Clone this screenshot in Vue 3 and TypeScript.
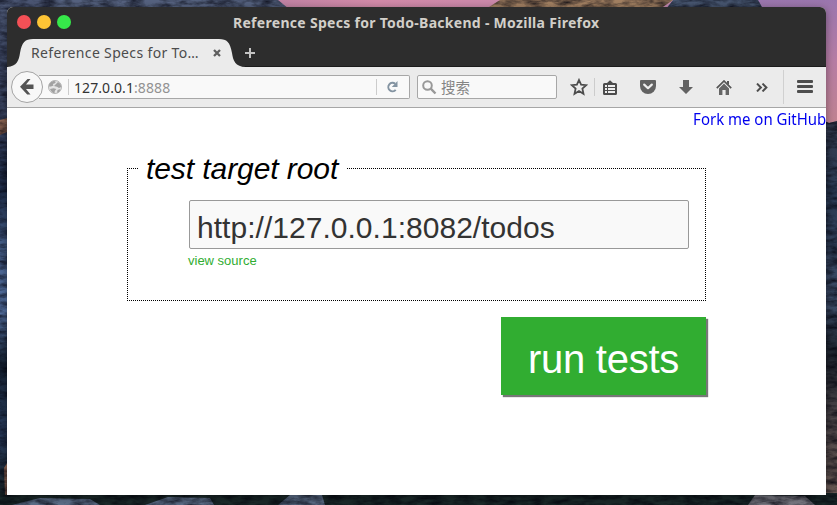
<script setup lang="ts">
import { ref } from 'vue'

const pageTitle = 'Reference Specs for Todo-Backend - Mozilla Firefox'
const tabTitle = 'Reference Specs for To…'
const targetRoot = ref('http://127.0.0.1:8082/todos')
</script>

<template>
  <div class="desktop">
    <svg class="wallpaper" width="837" height="505" viewBox="0 0 837 505" aria-hidden="true">
      <defs>
        <linearGradient id="sky" x1="0" x2="1" y1="0" y2="0">
          <stop offset="0" stop-color="#8c6b95" />
          <stop offset=".45" stop-color="#d28aa8" />
          <stop offset="1" stop-color="#b985b2" />
        </linearGradient>
        <linearGradient id="skyRight" x1="0" x2="0" y1="0" y2="1">
          <stop offset="0" stop-color="#9a76ae" />
          <stop offset=".5" stop-color="#b77da4" />
          <stop offset="1" stop-color="#c08391" />
        </linearGradient>
        <linearGradient id="cliffLeft" x1="0" x2="0" y1="0" y2="1">
          <stop offset="0" stop-color="#4b5673" />
          <stop offset=".22" stop-color="#3c4764" />
          <stop offset=".38" stop-color="#202f4b" />
          <stop offset=".5" stop-color="#4c6793" />
          <stop offset=".62" stop-color="#5470a0" />
          <stop offset=".72" stop-color="#182535" />
          <stop offset=".86" stop-color="#2b3f60" />
          <stop offset="1" stop-color="#17211f" />
        </linearGradient>
        <linearGradient id="cliffRight" x1="0" x2="0" y1="0" y2="1">
          <stop offset="0" stop-color="#353c50" />
          <stop offset=".2" stop-color="#2c3b54" />
          <stop offset=".48" stop-color="#3d4c67" />
          <stop offset=".6" stop-color="#1f2630" />
          <stop offset=".8" stop-color="#51494b" />
          <stop offset="1" stop-color="#6b5a53" />
        </linearGradient>
        <filter id="rock" x="0" y="0" width="100%" height="100%" color-interpolation-filters="sRGB">
          <feTurbulence type="fractalNoise" baseFrequency=".07 .2" numOctaves="4" seed="4" />
          <feColorMatrix values="0 0 0 0 0  0 0 0 0 0  0 0 0 0 0.04  1.3 0 0 0 -.42" />
          <feComposite in2="SourceGraphic" operator="in" result="shade" />
          <feMerge>
            <feMergeNode in="SourceGraphic" />
            <feMergeNode in="shade" />
          </feMerge>
        </filter>
      </defs>
      <rect width="837" height="505" fill="url(#sky)" />
      <rect x="758" width="79" height="124" fill="url(#skyRight)" />
      <g filter="url(#rock)">
        <path d="M0 0H55L62 7V505H0Z" fill="url(#cliffLeft)" />
        <path d="M50 0H278L289 9H50Z" fill="#55627f" />
        <path d="M486 9L500 0H673L660 9Z" fill="#a28062" />
        <path d="M666 9L673 0H758L763 9Z" fill="#475670" />
        <path d="M820 119L829 123L837 121V505H820Z" fill="url(#cliffRight)" />
        <path d="M0 493H837V505H0Z" fill="#1b2a2a" />
        <path d="M12 505L40 498L90 499L100 505ZM145 505L168 497L210 498L214 505ZM278 505L290 495H322L325 505Z" fill="#5c6e88" />
        <path d="M748 505L755 495L805 496L815 505Z" fill="#777780" />
        <path d="M0 120L7 118V132L0 135ZM4 468L7 463V495H5Z" fill="#8d6553" />
      </g>
    </svg>

    <div class="window">
      <header class="titlebar">
        <div class="lights"><i class="red"></i><i class="yellow"></i><i class="green"></i></div>
        <span class="window-title">{{ pageTitle }}</span>
      </header>

      <div class="tabstrip">
        <div class="tab">
          <svg class="tab-shape" width="240" height="28" viewBox="0 0 240 28">
            <path d="M0 28C11 28 13 21 14 14C16 3 19 0 27 0H213C221 0 224 3 226 14C227 21 229 28 240 28Z" fill="#ebebeb" />
          </svg>
          <span class="tab-title">{{ tabTitle }}</span>
          <svg class="tab-close" width="8" height="8" viewBox="0 0 8 8">
            <path d="M1 1L7 7M7 1L1 7" stroke="#5f5f5f" stroke-width="2.3" />
          </svg>
        </div>
        <svg class="new-tab" width="10" height="10" viewBox="0 0 10 10">
          <path d="M5 0V10M0 5H10" stroke="#c4c4c4" stroke-width="2" />
        </svg>
      </div>

      <div class="toolbar">
        <div class="back">
          <svg width="14" height="16" viewBox="0 0 14 16">
            <path d="M7.5 0H10.5L6 5.5H13.5V10H6L10.5 15.5H7.2L0 7.8Z" fill="#555" />
          </svg>
        </div>
        <div class="urlbar">
          <svg class="globe" width="14" height="14" viewBox="0 0 14 14">
            <circle cx="7" cy="7" r="6.5" fill="#e4e4e4" stroke="#b5b5b5" />
            <path d="M1 4.5L3 2L6 .8L8 2L6.5 3.6L4.8 4L5.5 5.5L3.8 6.2L1.3 6.8ZM6 6L8 4L10 2L12.5 4L13.3 7L11 8L9 6.8ZM2 9L5.5 8.2L8.3 9L6.8 11L6.5 13.3L4.8 12.7L3 11ZM9.5 10L12.5 9L11.5 11.6L9 13Z" fill="#a2a2a2" />
          </svg>
          <span class="url">127.0.0.1<em>:8888</em></span>
          <span class="reload">
            <svg width="12" height="12" viewBox="0 0 12 12">
              <path d="M9.2 2.8A4.2 4.2 0 1 0 9.7 8.8" fill="none" stroke="#8494a2" stroke-width="2" />
              <path d="M11.5 0V6H5.8Z" fill="#8494a2" />
            </svg>
          </span>
        </div>
        <div class="search">
          <svg width="15" height="15" viewBox="0 0 15 15">
            <circle cx="5.5" cy="5.5" r="4.3" fill="none" stroke="#999" stroke-width="2" />
            <path d="M8.7 8.7L13.5 13.5" stroke="#999" stroke-width="2.4" />
          </svg>
          <span>搜索</span>
        </div>
        <div class="tool star">
          <svg width="18" height="18" viewBox="0 0 18 18">
            <path d="M9 2L11.1 6.7L16.2 7.2L12.4 10.6L13.5 15.8L9 13.1L4.5 15.8L5.6 10.6L1.8 7.2L6.9 6.7Z" fill="none" stroke="#4d4d4d" stroke-width="1.8" />
          </svg>
        </div>
        <div class="tool list">
          <svg width="14" height="15" viewBox="0 0 14 15">
            <path d="M1.5 3H4L7 .2L10 3H12.5Q14 3 14 4.5V13.5Q14 15 12.5 15H1.5Q0 15 0 13.5V4.5Q0 3 1.5 3Z" fill="#4c4c4c" />
            <path d="M2 5H4V7H2ZM5 5H12V7H5ZM2 8H4V10H2ZM5 8H12V10H5ZM2 11H4V13H2ZM5 11H12V13H5Z" fill="#eee" />
          </svg>
        </div>
        <div class="tool">
          <svg width="16" height="14" viewBox="0 0 16 14">
            <path d="M1 0H15Q16 0 16 1V6A8 8 0 0 1 0 6V1Q0 0 1 0Z" fill="#626262" />
            <path d="M4.2 4.6L8 8.2L11.8 4.6" fill="none" stroke="#eee" stroke-width="2.2" stroke-linecap="round" stroke-linejoin="round" />
          </svg>
        </div>
        <div class="tool">
          <svg width="14" height="14" viewBox="0 0 14 14">
            <path d="M4 0H10V7H14L7 14L0 7H4Z" fill="#626262" />
          </svg>
        </div>
        <div class="tool">
          <svg width="16" height="15" viewBox="0 0 16 15">
            <path d="M.8 8.2L8 1L15.2 8.2" fill="none" stroke="#555" stroke-width="1.7" />
            <path d="M11 1H13V5L11 3.5Z" fill="#555" />
            <path d="M8 3.5L13 8.4V15H9.6V10H6.4V15H3V8.4Z" fill="#656565" />
          </svg>
        </div>
        <div class="tool">
          <svg width="12" height="9" viewBox="0 0 12 9">
            <path d="M1 .6L4.9 4.5L1 8.4M6.5 .6L10.4 4.5L6.5 8.4" fill="none" stroke="#4d4d4d" stroke-width="2" />
          </svg>
        </div>
        <div class="menu"><i></i><i></i><i></i></div>
      </div>

      <main class="page">
        <a class="fork">Fork me on GitHub</a>
        <form class="runner" @submit.prevent>
          <fieldset>
            <legend>test target root</legend>
            <input v-model="targetRoot" type="text" spellcheck="false" />
            <a class="source">view source</a>
          </fieldset>
          <button type="submit">run tests</button>
        </form>
      </main>
    </div>
  </div>
</template>

<style>
body {
  overflow: hidden;
}
</style>

<style scoped>
* {
  box-sizing: border-box;
}
svg {
  display: block;
  flex: none;
}
.desktop {
  position: relative;
  width: 837px;
  height: 505px;
  padding: 7px 11px 10px 7px;
  overflow: hidden;
  font-family: "Noto Sans", "Noto Sans CJK SC", sans-serif;
}
.wallpaper {
  position: absolute;
  inset: 0;
}
.window {
  position: relative;
  display: flex;
  flex-direction: column;
  height: 488px;
  background: #fff;
  border-radius: 6px 6px 0 0;
  box-shadow: 0 2px 9px rgba(0, 0, 0, .4);
  overflow: hidden;
}
.titlebar {
  display: flex;
  height: 32px;
  background: #2d2d2d;
}
.lights {
  display: flex;
  gap: 6px;
  width: 226px;
  padding: 8px 0 0 10px;
}
.lights i {
  width: 14px;
  height: 14px;
  border-radius: 50%;
}
.red { background: #f45056; }
.yellow { background: #fdc435; }
.green { background: #36e84a; }
.window-title {
  color: #d2cfc9;
  font: bold 14px/32px "Noto Sans", sans-serif;
  letter-spacing: .29px;
  white-space: nowrap;
}
.tabstrip {
  display: flex;
  height: 28px;
  background: #2d2d2d;
  box-shadow: inset 0 -1px #1b1b1b;
}
.tab {
  position: relative;
  display: flex;
  align-items: center;
  width: 238px;
  padding-left: 24px;
}
.tab-shape {
  position: absolute;
  left: -1px;
  top: 0;
}
.tab-title {
  position: relative;
  width: 182px;
  color: #4c4c4c;
  font-size: 14px;
  letter-spacing: .35px;
  line-height: 28px;
  white-space: nowrap;
}
.tab-close {
  position: relative;
}
.new-tab {
  margin-top: 9px;
}
.toolbar {
  display: flex;
  align-items: center;
  height: 41px;
  background: #ebebeb;
  border-bottom: 1px solid #a6a6a6;
}
.back {
  z-index: 1;
  display: flex;
  align-items: center;
  justify-content: center;
  width: 32px;
  height: 32px;
  margin-left: 4px;
  background: #f8f8f8;
  border: 1px solid #a4a4a4;
  border-radius: 50%;
}
.urlbar {
  display: flex;
  align-items: center;
  width: 371px;
  height: 24px;
  margin-left: -4px;
  padding-left: 9px;
  background: #f9f9f9;
  border: 1px solid #a7a7a7;
  border-left: 0;
  border-radius: 0 2px 2px 0;
}
.url {
  width: 308px;
  margin-left: 6px;
  padding: 1px 0 0 5px;
  border-left: 1px solid #ccc;
  color: #333;
  font-size: 14px;
  letter-spacing: .08px;
  line-height: 15px;
  white-space: nowrap;
}
.url em {
  color: #929292;
  font-style: normal;
}
.reload {
  display: flex;
  align-items: center;
  height: 16px;
  padding-left: 9px;
  border-left: 1px solid #ccc;
}
.search {
  display: flex;
  align-items: center;
  gap: 4px;
  width: 140px;
  height: 24px;
  margin-left: 7px;
  padding-left: 4px;
  background: #f9f9f9;
  border: 1px solid #a7a7a7;
  border-radius: 2px;
  color: #858585;
  font: 14.5px/22px "Noto Sans CJK SC", sans-serif;
}
.tool {
  display: flex;
  align-items: center;
  justify-content: center;
  width: 38px;
}
.star {
  width: 18px;
  margin-left: 13px;
  margin-right: 6px;
}
.list {
  width: 35px;
  height: 18px;
  padding-right: 4px;
  border-left: 1px solid #ccc;
}
.menu {
  display: flex;
  flex: 1;
  flex-direction: column;
  align-items: center;
  justify-content: center;
  gap: 2px;
  height: 34px;
  margin-left: 2px;
  padding-bottom: 1px;
  border-left: 1px solid #d0d0d0;
}
.menu i {
  width: 16px;
  height: 3px;
  background: #4d4d4d;
  border-radius: 1px;
}
.page {
  display: flex;
  flex: 1;
  flex-direction: column;
}
.fork {
  align-self: flex-end;
  color: #00e;
  font-size: 16px;
  line-height: 23px;
  white-space: nowrap;
  transform: scaleX(.936);
  transform-origin: right center;
}
.runner {
  display: flex;
  flex-direction: column;
  width: 579px;
  margin: 20px 0 0 120px;
  font-family: "Liberation Sans", Arial, sans-serif;
}
fieldset {
  display: flex;
  flex-direction: column;
  align-items: flex-start;
  height: 150px;
  margin: 0;
  padding: 14px 16px 0 61px;
  border: 1px dotted #000;
}
legend {
  height: 34px;
  margin-left: -51px;
  padding: 1px 8px 0;
  color: #000;
  font-size: 30px;
  font-style: italic;
  letter-spacing: -.08px;
  line-height: 34px;
  white-space: nowrap;
}
input {
  width: 500px;
  height: 49px;
  margin-top: 1px;
  padding: 7px 7px 0;
  background: #f9f9f9;
  border: 1px solid #999;
  border-radius: 2px;
  color: #333;
  font: 30px "Liberation Sans", Arial, sans-serif;
  letter-spacing: .03px;
  outline: 0;
}
.source {
  margin: 4px 0 0 -1px;
  color: #31ad31;
  font-size: 13px;
  line-height: 15px;
}
button {
  align-self: flex-end;
  width: 205px;
  height: 78px;
  margin-top: 16px;
  padding: 6px 0 0;
  background: #31ad31;
  border: 0;
  box-shadow: 2px 2px 1px #777;
  color: #fff;
  font: 40px "Liberation Sans", Arial, sans-serif;
  letter-spacing: -.25px;
}
</style>
